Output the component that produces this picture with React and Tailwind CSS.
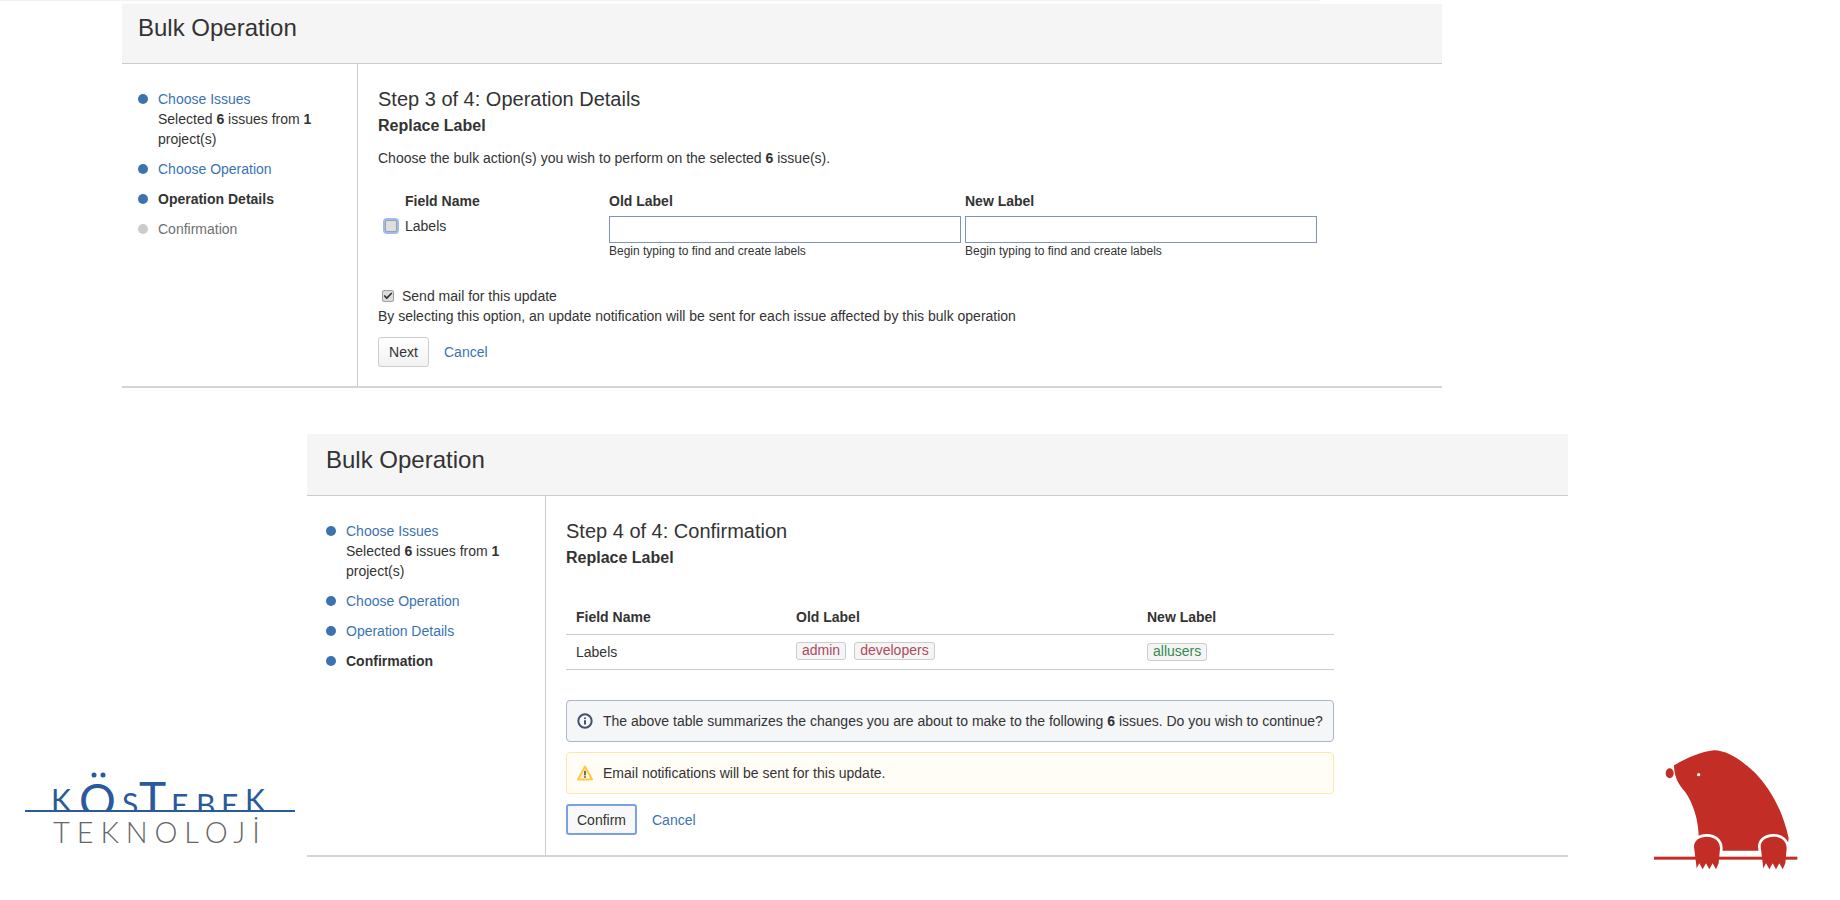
import React from 'react';
import { Check, Info } from 'lucide-react';

const Step = ({ state, children, extra }) => {
  const dot = state === 'todo' ? 'bg-[#cccccc]' : 'bg-[#3b73af]';
  const text =
    state === 'current'
      ? 'font-bold text-[#333333]'
      : state === 'todo'
        ? 'text-[#707070]'
        : 'text-[#3b73af]';
  return (
    <li className="flex gap-[10px]">
      <span className={`mt-[5px] h-[10px] w-[10px] shrink-0 rounded-full ${dot}`} />
      <div className="leading-5">
        <div className={text}>{children}</div>
        {extra}
      </div>
    </li>
  );
};

const Selected = () => (
  <div className="text-[#333333]">
    Selected <b>6</b> issues from <b>1</b>
    <br />
    project(s)
  </div>
);

const Sidebar = ({ steps, className }) => (
  <ul className={`flex flex-col gap-[10px] pr-3 pt-[25px] ${className}`}>
    {steps.map(([label, state], i) => (
      <Step key={label} state={state} extra={i === 0 ? <Selected /> : null}>
        {label}
      </Step>
    ))}
  </ul>
);

const Tag = ({ children, color }) => (
  <span className={`inline-block h-[18px] rounded-[3px] border border-[#cccccc] bg-[#f5f5f5] px-[5px] leading-[15px] ${color}`}>
    {children}
  </span>
);

const HintInput = () => (
  <div>
    <input type="text" className="block h-[27px] w-[352px] border border-[#7f93bf] bg-white outline-none" />
    <div className="text-xs leading-4 text-[#333333]">Begin typing to find and create labels</div>
  </div>
);

const WarnIcon = () => (
  <svg className="shrink-0" width="16" height="16" viewBox="0 0 16 16">
    <path d="M8 1.6 L15 14.4 L1 14.4 Z" fill="#fff6d8" stroke="#ffc945" strokeWidth="2" strokeLinejoin="round" />
    <rect x="7.2" y="5.8" width="1.6" height="4.6" fill="#5a4a2a" />
    <rect x="7.2" y="11.2" width="1.6" height="1.6" fill="#5a4a2a" />
  </svg>
);

const Step3 = () => (
  <div className="ml-[122px] mt-[3px] w-[1320px] border-b-2 border-[#d4d4d4]">
    <div className="h-[60px] border-b border-[#cccccc] bg-[#f5f5f5] pl-[16px] pt-[9px] text-2xl leading-[30px]">Bulk Operation</div>
    <div className="flex h-[322px]">
      <Sidebar
        className="w-[236px] border-r border-[#cccccc] pl-4"
        steps={[
          ['Choose Issues', 'done'],
          ['Choose Operation', 'done'],
          ['Operation Details', 'current'],
          ['Confirmation', 'todo'],
        ]}
      />
      <div className="flex-1 pl-5 pt-[21px]">
        <h2 className="text-xl leading-7">Step 3 of 4: Operation Details</h2>
        <h3 className="mt-[3px] text-base font-bold leading-5">Replace Label</h3>
        <p className="mt-[12px] leading-5">
          Choose the bulk action(s) you wish to perform on the selected <b>6</b> issue(s).
        </p>
        <div className="ml-[6px] mt-[23px] grid grid-cols-[21px_204px_352px_356px]">
          <div />
          <div className="font-bold leading-5">Field Name</div>
          <div className="font-bold leading-5">Old Label</div>
          <div className="pl-[4px] font-bold leading-5">New Label</div>
          <div className="pl-[1px] pt-[9px]">
            <span className="block h-3 w-3 rounded-[2px] border border-[#a0a0a0] bg-[#dedede] ring-2 ring-[#9dbcec]" />
          </div>
          <div className="pt-[5px] leading-5">Labels</div>
          <div className="pt-[5px]">
            <HintInput />
          </div>
          <div className="pl-[4px] pt-[5px]">
            <HintInput />
          </div>
        </div>
        <div className="mt-[27px] flex items-center gap-2 pl-1 leading-5">
          <span className="flex h-3 w-3 items-center justify-center rounded-[2px] border border-[#a0a0a0] bg-[#dcdcdc]">
            <Check className="h-[10px] w-[10px] text-[#333333]" strokeWidth={4} />
          </span>
          Send mail for this update
        </div>
        <p className="leading-5">By selecting this option, an update notification will be sent for each issue affected by this bulk operation</p>
        <div className="mt-[11px] flex items-center gap-[15px]">
          <button className="h-[30px] w-[51px] rounded-[3px] border border-[#cccccc] bg-gradient-to-b from-white to-[#f2f2f2] text-[#333333]">Next</button>
          <span className="text-[#3b73af]">Cancel</span>
        </div>
      </div>
    </div>
  </div>
);

const Step4 = () => (
  <div className="ml-[307px] mt-[46px] w-[1261px] border-b-2 border-[#d4d4d4]">
    <div className="h-[62px] border-b border-[#cccccc] bg-[#f5f5f5] pl-[19px] pt-[11px] text-2xl leading-[30px]">Bulk Operation</div>
    <div className="flex h-[359px]">
      <Sidebar
        className="w-[239px] border-r border-[#cccccc] pl-[19px]"
        steps={[
          ['Choose Issues', 'done'],
          ['Choose Operation', 'done'],
          ['Operation Details', 'done'],
          ['Confirmation', 'current'],
        ]}
      />
      <div className="w-[788px] pl-5 pt-[21px]">
        <h2 className="text-xl leading-7">Step 4 of 4: Confirmation</h2>
        <h3 className="mt-[3px] text-base font-bold leading-5">Replace Label</h3>
        <table className="mt-[32px] w-full table-fixed">
          <thead>
            <tr className="border-b border-[#cccccc] text-left">
              <th className="w-[230px] pb-[7px] pl-[10px] pt-[7px] font-bold leading-5">Field Name</th>
              <th className="w-[351px] pb-[7px] pt-[7px] font-bold leading-5">Old Label</th>
              <th className="pb-[7px] pt-[7px] font-bold leading-5">New Label</th>
            </tr>
          </thead>
          <tbody>
            <tr className="h-[35px] border-b border-[#cccccc]">
              <td className="pl-[10px] leading-5">Labels</td>
              <td className="pb-[2px]">
                <div className="flex gap-2">
                  <Tag color="text-[#ac4a5f]">admin</Tag>
                  <Tag color="text-[#ac4a5f]">developers</Tag>
                </div>
              </td>
              <td className="pb-[2px]">
                <Tag color="text-[#33894c]">allusers</Tag>
              </td>
            </tr>
          </tbody>
        </table>
        <div className="mt-[30px] flex h-[42px] items-center gap-[10px] rounded-[4px] border border-[#a8b5cb] bg-[#f5f6f8] pl-[10px]">
          <Info className="h-4 w-4 shrink-0 text-[#42526e]" strokeWidth={3} />
          <span>
            The above table summarizes the changes you are about to make to the following <b>6</b> issues. Do you wish to continue?
          </span>
        </div>
        <div className="mt-[10px] flex h-[42px] items-center gap-[10px] rounded-[4px] border border-[#fde8a8] bg-[#fffdf6] pl-[10px]">
          <WarnIcon />
          <span>Email notifications will be sent for this update.</span>
        </div>
        <div className="mt-[10px] flex items-center gap-[15px]">
          <button className="h-[31px] w-[71px] rounded-[3px] border-2 border-[#7ba2e0] bg-[#f8f8f8] text-[#333333]">Confirm</button>
          <span className="text-[#3b73af]">Cancel</span>
        </div>
      </div>
    </div>
  </div>
);

const KostebekLogo = () => (
  <svg className="absolute left-[10px] top-[760px]" width="300" height="120" viewBox="0 0 300 120">
    <defs>
      <clipPath id="above-line">
        <rect x="0" y="0" width="300" height="51" />
      </clipPath>
    </defs>
    <g clipPath="url(#above-line)" fill="#2a5a9c" fontFamily="Lato, sans-serif" fontWeight="400">
      <text x="41" y="51" fontSize="30">K</text>
      <text x="69" y="57" fontSize="46">O</text>
      <text x="112" y="55" fontSize="30">S</text>
      <text x="129" y="55" fontSize="46">T</text>
      <text x="161" y="56" fontSize="30">E</text>
      <text x="186" y="56" fontSize="30">B</text>
      <text x="211" y="56" fontSize="30">E</text>
      <text x="235" y="51" fontSize="30">K</text>
    </g>
    <circle cx="84" cy="15" r="2.5" fill="#2a5a9c" />
    <circle cx="93" cy="15" r="2.5" fill="#2a5a9c" />
    <rect x="15" y="50" width="270" height="2" fill="#2a5a9c" />
    <text x="43" y="83" fontSize="29" fontFamily="Lato, sans-serif" fontWeight="300" letterSpacing="6.9" fill="#666666">TEKNOLOJİ</text>
  </svg>
);

const molePaw = (x) =>
  `M${x} 350 C${x} 330 ${x + 18} 320 ${x + 38} 320 C${x + 63} 320 ${x + 78} 335 ${x + 78} 355 L${x + 74} 400 L${x + 66} 418 L${x + 56} 400 L${x + 46} 418 L${x + 36} 400 L${x + 26} 418 L${x + 16} 400 L${x + 8} 415 Z`;

const MoleLogo = () => (
  <svg className="absolute left-[1640px] top-[730px]" width="190" height="150" viewBox="0 0 570 450">
    <path
      fill="#c22d26"
      d="M102 106 C140 84 180 66 222 61 C265 62 305 92 345 128 C390 175 428 240 446 325 L440 362 L172 362 L176 315 C175 270 160 220 135 185 C116 165 102 140 102 106 Z"
    />
    <ellipse cx="89" cy="130" rx="12" ry="15" fill="#c22d26" />
    <circle cx="176" cy="134" r="5" fill="#fff" />
    <path d={molePaw(162)} fill="#fff" stroke="#fff" strokeWidth="16" />
    <path d={molePaw(362)} fill="#fff" stroke="#fff" strokeWidth="16" />
    <rect x="42" y="380" width="430" height="9" fill="#c22d26" />
    <path d={molePaw(162)} fill="#c22d26" />
    <path d={molePaw(362)} fill="#c22d26" />
  </svg>
);

export default function App() {
  return (
    <div className="relative h-[900px] w-[1840px] overflow-hidden bg-white font-['Liberation_Sans',Arial,sans-serif] text-sm text-[#333333]">
      <div className="h-px w-[1320px] bg-[#f2f2f2]" />
      <Step3 />
      <Step4 />
      <KostebekLogo />
      <MoleLogo />
    </div>
  );
}
